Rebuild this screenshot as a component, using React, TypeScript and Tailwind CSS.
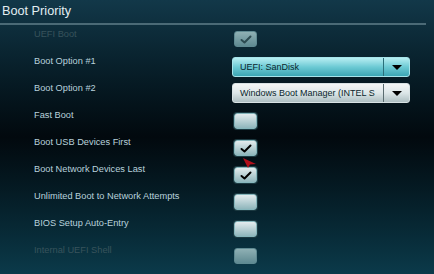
const font = { fontFamily: '"Liberation Sans", Arial, sans-serif' };

type Row =
  | { label: string; kind: "check"; checked: boolean; disabled?: boolean }
  | { label: string; kind: "select"; value: string; active?: boolean };

const rows: Row[] = [
  { label: "UEFI Boot", kind: "check", checked: true, disabled: true },
  { label: "Boot Option #1", kind: "select", value: "UEFI: SanDisk", active: true },
  { label: "Boot Option #2", kind: "select", value: "Windows Boot Manager (INTEL S" },
  { label: "Fast Boot", kind: "check", checked: false },
  { label: "Boot USB Devices First", kind: "check", checked: true },
  { label: "Boot Network Devices Last", kind: "check", checked: true },
  { label: "Unlimited Boot to Network Attempts", kind: "check", checked: false },
  { label: "BIOS Setup Auto-Entry", kind: "check", checked: false },
  { label: "Internal UEFI Shell", kind: "check", checked: false, disabled: true },
];

function Check({ checked, disabled }: { checked: boolean; disabled?: boolean }) {
  return (
    <div
      className={
        "flex h-[16px] w-[23px] items-center justify-center rounded-[3px] border " +
        (disabled
          ? "border-[#5f8a92] bg-gradient-to-b from-[#8fb0b4] to-[#5f8a92]"
          : "border-[#86b6bc] bg-gradient-to-b from-[#e4ecee] to-[#8fb6bc] shadow-[0_0_0_1px_#1c3a42]")
      }
    >
      {checked && (
        <svg width="12" height="9" viewBox="0 0 12 9">
          <path
            d="M1.5 5 L4.5 7.5 L10.5 1.5"
            fill="none"
            stroke={disabled ? "#2c4a50" : "#000"}
            strokeWidth="2"
            strokeLinecap="round"
            strokeLinejoin="round"
          />
        </svg>
      )}
    </div>
  );
}

function Select({ value, active }: { value: string; active?: boolean }) {
  return (
    <div
      className={
        "ml-[-2px] flex h-[20px] w-[178px] items-stretch overflow-hidden rounded-[3px] border " +
        (active
          ? "border-[#a6e4ea] bg-gradient-to-b from-[#b6eef2] via-[#6ccad4] to-[#3aa6b4]"
          : "border-[#d8e2e4] bg-gradient-to-b from-[#f4f7f7] via-[#dce6e8] to-[#aebfc2]")
      }
    >
      <div className="flex-1 whitespace-nowrap pl-[7px] text-[9px] leading-[18px] text-[#0a262c]">{value}</div>
      <div className={"w-[1px] " + (active ? "bg-[#2a6f7a]" : "bg-[#5a6c70]")} />
      <div className="flex w-[25px] items-center justify-center">
        <svg width="10" height="5" viewBox="0 0 10 5">
          <path d="M0 0 H10 L5 5 Z" fill="#000" />
        </svg>
      </div>
    </div>
  );
}

export default function App() {
  return (
    <div
      className="relative h-[274px] w-[434px] overflow-hidden bg-gradient-to-b from-[#123849] via-[#02090e] to-[#0b3a4a]"
      style={font}
    >
      <div className="h-[23px] pl-[2px] pt-[2px] text-[12.7px] leading-[18px] text-[#e2eef2]">Boot Priority</div>
      <div className="mr-[8px] h-[2px] bg-[#4b6a76]" />
      <div className="flex flex-col">
        {rows.map((r, i) => {
          const dim = r.kind === "check" && r.disabled;
          return (
            <div key={r.label} className={"flex h-[27px] items-start " + (i === 0 ? "-mt-[4px]" : "")}>
              <div
                className={
                  "w-[234px] pl-[34px] text-[9.25px] leading-[27px] " +
                  (dim ? "text-[#38535c]" : "text-[#b9d2dc]")
                }
              >
                {r.label}
              </div>
              <div className={r.kind === "select" ? (i === 1 ? "mt-[9px]" : "mt-[8px]") : i === 0 ? "mt-[10px]" : "mt-[11px]"}>
                {r.kind === "check" ? (
                  <Check checked={r.checked} disabled={r.disabled} />
                ) : (
                  <Select value={r.value} active={r.active} />
                )}
              </div>
            </div>
          );
        })}
      </div>
      <svg className="absolute left-[243px] top-[158px]" width="14" height="10" viewBox="0 0 14 10">
        <path d="M0 0 L13 6 L7 6.5 L5 10 Z" fill="#b0101c" />
      </svg>
    </div>
  );
}
